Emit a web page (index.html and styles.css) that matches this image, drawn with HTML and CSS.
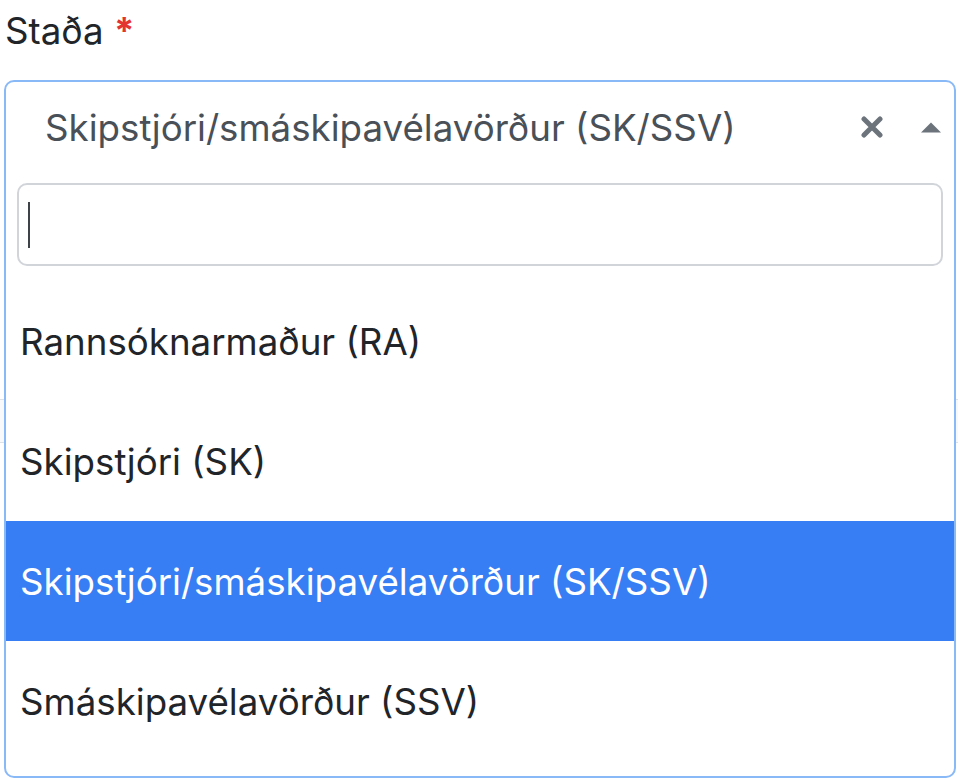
FILE: index.html
```html
<!DOCTYPE html>
<html lang="is">
<head>
<meta charset="utf-8">
<title>Staða</title>
<link rel="stylesheet" href="styles.css">
</head>
<body>
<div class="page-band"></div>
<div class="field">
  <label class="field-label">Staða <span class="req">*</span></label>
  <div class="select">
    <div class="selection">
      <span class="selection-text">Skipstjóri/smáskipavélavörður (SK/SSV)</span>
      <span class="clear">
        <svg width="22" height="22" viewBox="0 0 22 22"><path d="M3 3 L19 19 M19 3 L3 19" stroke="#6c737b" stroke-width="5" stroke-linecap="round"/></svg>
      </span>
      <span class="arrow">
        <svg width="20" height="11" viewBox="0 0 20 11"><path d="M0 10.5 L10 0.5 L20 10.5 Z" fill="#6c737b"/></svg>
      </span>
    </div>
    <div class="search-wrap">
      <div class="search"><span class="caret"></span></div>
    </div>
    <ul class="options">
      <li class="option">Rannsóknarmaður (RA)</li>
      <li class="option">Skipstjóri (SK)</li>
      <li class="option option-active">Skipstjóri/smáskipavélavörður (SK/SSV)</li>
      <li class="option">Smáskipavélavörður (SSV)</li>
    </ul>
  </div>
</div>
</body>
</html>
```
FILE: styles.css
```css
html, body {
  margin: 0;
  padding: 0;
  background: #ffffff;
}
body {
  font-family: Inter, "Liberation Sans", sans-serif;
  color: #212529;
  position: relative;
  width: 958px;
  height: 780px;
  overflow: hidden;
}
.page-band {
  position: absolute;
  left: 0;
  right: 0;
  top: 399px;
  height: 42px;
  background: #f8f9fa;
  border-top: 1px solid #dee2e6;
  border-bottom: 1px solid #dee2e6;
  z-index: 0;
}
.field {
  position: relative;
  z-index: 1;
}
.field-label {
  display: block;
  font-size: 36.7px;
  line-height: 62px;
  height: 80px;
  padding-left: 5px;
  color: #212529;
}
.req {
  color: #e3342f;
  font-weight: 700;
}
.select {
  margin-left: 4px;
  width: 952px;
  height: 698px;
  box-sizing: border-box;
  border: 2px solid #8ab9f8;
  border-radius: 10px;
  background: #ffffff;
  overflow: hidden;
}
.selection {
  display: flex;
  align-items: center;
  height: 90px;
  padding-left: 39px;
  padding-right: 13px;
}
.selection-text {
  flex: 1;
  font-size: 36.7px;
  color: #495057;
}
.clear {
  display: flex;
  width: 22px;
  height: 22px;
  margin-right: 38px;
}
.arrow {
  display: flex;
  width: 20px;
  height: 11px;
}
.search-wrap {
  padding: 11px 11px 15px;
}
.search {
  height: 83px;
  box-sizing: border-box;
  border: 2px solid #d1d5da;
  border-radius: 10px;
  display: flex;
  align-items: center;
  padding-left: 9px;
}
.caret {
  width: 2px;
  height: 46px;
  background: #3d4349;
}
.options {
  list-style: none;
  margin: 0;
  padding: 0;
}
.option {
  height: 120px;
  display: flex;
  align-items: center;
  padding-left: 14px;
  font-size: 36.7px;
  color: #212529;
}
.option-active {
  background: #377df4;
  color: #ffffff;
}
```
